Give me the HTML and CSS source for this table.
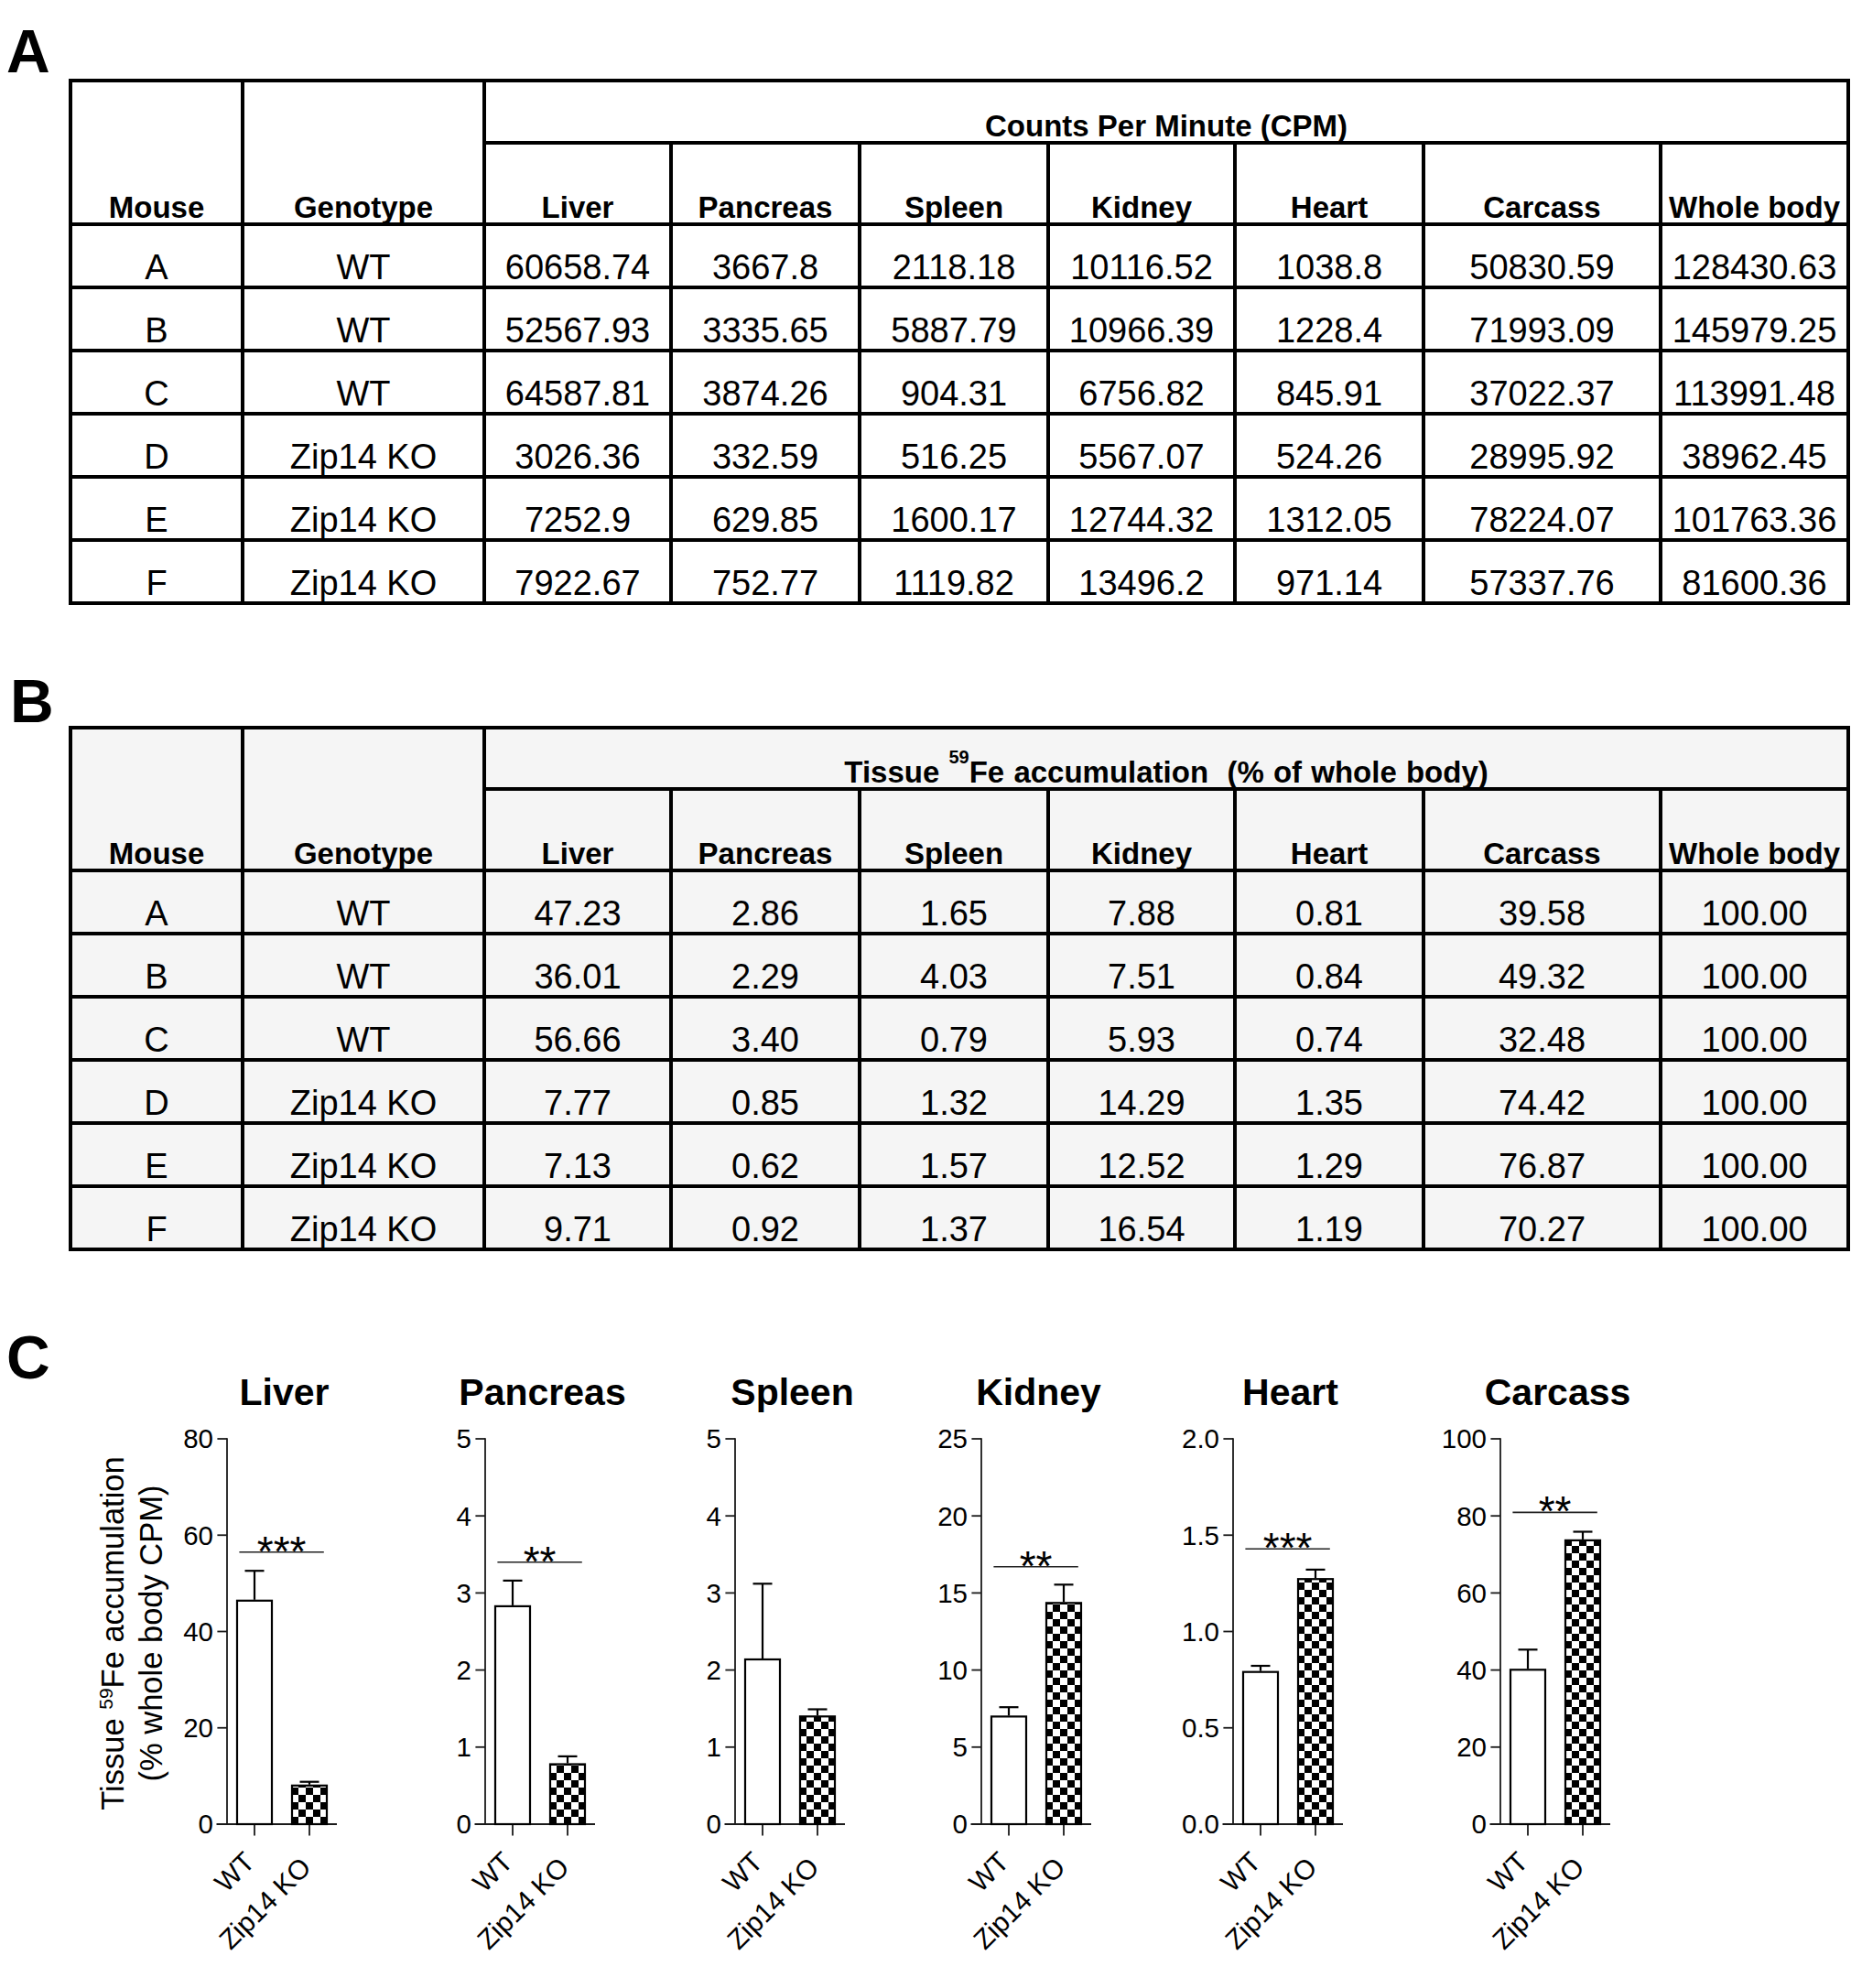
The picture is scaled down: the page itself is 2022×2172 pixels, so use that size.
FILE: index.html
```html
<!DOCTYPE html>
<html lang="en">
<head>
<meta charset="utf-8">
<title>Tissue 59Fe accumulation</title>
<link rel="stylesheet" href="styles.css">
</head>
<body>
<section class="panel panel-a">
  <div class="panel-label">A</div>
  <table class="data-table">
    <colgroup>
      <col class="col-mouse"><col class="col-geno"><col class="col-a"><col class="col-b"><col class="col-c"><col class="col-d"><col class="col-e"><col class="col-f"><col class="col-g">
    </colgroup>
    <tr class="row-top"><th rowspan="2">Mouse</th><th rowspan="2">Genotype</th><th colspan="7">Counts Per Minute (CPM)</th></tr>
    <tr class="row-sub"><th>Liver</th><th>Pancreas</th><th>Spleen</th><th>Kidney</th><th>Heart</th><th>Carcass</th><th>Whole body</th></tr>
    <tr class="row-data"><td>A</td><td>WT</td><td>60658.74</td><td>3667.8</td><td>2118.18</td><td>10116.52</td><td>1038.8</td><td>50830.59</td><td>128430.63</td></tr>
    <tr class="row-data"><td>B</td><td>WT</td><td>52567.93</td><td>3335.65</td><td>5887.79</td><td>10966.39</td><td>1228.4</td><td>71993.09</td><td>145979.25</td></tr>
    <tr class="row-data"><td>C</td><td>WT</td><td>64587.81</td><td>3874.26</td><td>904.31</td><td>6756.82</td><td>845.91</td><td>37022.37</td><td>113991.48</td></tr>
    <tr class="row-data"><td>D</td><td>Zip14 KO</td><td>3026.36</td><td>332.59</td><td>516.25</td><td>5567.07</td><td>524.26</td><td>28995.92</td><td>38962.45</td></tr>
    <tr class="row-data"><td>E</td><td>Zip14 KO</td><td>7252.9</td><td>629.85</td><td>1600.17</td><td>12744.32</td><td>1312.05</td><td>78224.07</td><td>101763.36</td></tr>
    <tr class="row-data"><td>F</td><td>Zip14 KO</td><td>7922.67</td><td>752.77</td><td>1119.82</td><td>13496.2</td><td>971.14</td><td>57337.76</td><td>81600.36</td></tr>
  </table>
</section>

<section class="panel panel-b">
  <div class="panel-label">B</div>
  <table class="data-table shaded">
    <colgroup>
      <col class="col-mouse"><col class="col-geno"><col class="col-a"><col class="col-b"><col class="col-c"><col class="col-d"><col class="col-e"><col class="col-f"><col class="col-g">
    </colgroup>
    <tr class="row-top"><th rowspan="2">Mouse</th><th rowspan="2">Genotype</th><th colspan="7" class="wide-head">Tissue <sup class="iso">59</sup>Fe accumulation&nbsp; (% of whole body)</th></tr>
    <tr class="row-sub"><th>Liver</th><th>Pancreas</th><th>Spleen</th><th>Kidney</th><th>Heart</th><th>Carcass</th><th>Whole body</th></tr>
    <tr class="row-data"><td>A</td><td>WT</td><td>47.23</td><td>2.86</td><td>1.65</td><td>7.88</td><td>0.81</td><td>39.58</td><td>100.00</td></tr>
    <tr class="row-data"><td>B</td><td>WT</td><td>36.01</td><td>2.29</td><td>4.03</td><td>7.51</td><td>0.84</td><td>49.32</td><td>100.00</td></tr>
    <tr class="row-data"><td>C</td><td>WT</td><td>56.66</td><td>3.40</td><td>0.79</td><td>5.93</td><td>0.74</td><td>32.48</td><td>100.00</td></tr>
    <tr class="row-data"><td>D</td><td>Zip14 KO</td><td>7.77</td><td>0.85</td><td>1.32</td><td>14.29</td><td>1.35</td><td>74.42</td><td>100.00</td></tr>
    <tr class="row-data"><td>E</td><td>Zip14 KO</td><td>7.13</td><td>0.62</td><td>1.57</td><td>12.52</td><td>1.29</td><td>76.87</td><td>100.00</td></tr>
    <tr class="row-data"><td>F</td><td>Zip14 KO</td><td>9.71</td><td>0.92</td><td>1.37</td><td>16.54</td><td>1.19</td><td>70.27</td><td>100.00</td></tr>
  </table>
</section>

<section class="panel panel-c">
  <div class="panel-label c-label">C</div>

  <!-- Liver -->
  <svg class="chart chart-liver" viewBox="0 0 340 690">
    <defs>
      <pattern id="checker" x="70" y="2" width="16" height="16" patternUnits="userSpaceOnUse">
        <rect width="16" height="16" fill="#fff"/>
        <rect x="8" y="0" width="8" height="8" fill="#000"/>
        <rect x="0" y="8" width="8" height="8" fill="#000"/>
      </pattern>
    </defs>
    <text class="ytitle" transform="translate(35 321.5) rotate(-90)">Tissue <tspan class="ysup" dy="-12">59</tspan><tspan dy="12">Fe accumulation</tspan></text>
    <text class="ytitle" transform="translate(76.5 321.5) rotate(-90)">(% whole body CPM)</text>
    <g transform="translate(148 0)">
      <text class="title" x="62.5" y="72">Liver</text>
      <line class="axis" x1="0" y1="108.3" x2="0" y2="530.7"/>
      <line class="axis" x1="-11.5" y1="530" x2="120" y2="530"/>
      <line class="axis" x1="-10.6" y1="530" x2="0" y2="530"/>
      <line class="axis" x1="-10.6" y1="424.75" x2="0" y2="424.75"/>
      <line class="axis" x1="-10.6" y1="319.5" x2="0" y2="319.5"/>
      <line class="axis" x1="-10.6" y1="214.25" x2="0" y2="214.25"/>
      <line class="axis" x1="-10.6" y1="109" x2="0" y2="109"/>
      <text class="tick" x="-15" y="540.4">0</text>
      <text class="tick" x="-15" y="435.15">20</text>
      <text class="tick" x="-15" y="329.9">40</text>
      <text class="tick" x="-15" y="224.65">60</text>
      <text class="tick" x="-15" y="119.4">80</text>
      <line class="axis" x1="30" y1="530" x2="30" y2="542.5"/>
      <line class="axis" x1="90" y1="530" x2="90" y2="542.5"/>
      <line class="err" x1="30" y1="284.8" x2="30" y2="253.2"/>
      <line class="err" x1="19.5" y1="253.2" x2="40.5" y2="253.2"/>
      <rect class="bar" x="11" y="285.8" width="38" height="244.2"/>
      <line class="err" x1="90" y1="486.8" x2="90" y2="483.7"/>
      <line class="err" x1="79.5" y1="483.7" x2="100.5" y2="483.7"/>
      <rect class="bar bar-ko" x="71" y="487.8" width="38" height="42.2"/>
      <line class="sig" x1="13.4" y1="232.7" x2="105.8" y2="232.7"/>
      <text class="stars" x="59.6" y="247.7">***</text>
      <text class="xlabel" transform="translate(32 573) rotate(-45)">WT</text>
      <text class="xlabel" transform="translate(93.5 579) rotate(-45)">Zip14 KO</text>
    </g>
  </svg>

  <!-- Pancreas -->
  <svg class="chart chart-pancreas" viewBox="0 0 273 690">
    <g transform="translate(90 0)">
      <text class="title" x="62.5" y="72">Pancreas</text>
      <line class="axis" x1="0" y1="108.3" x2="0" y2="530.7"/>
      <line class="axis" x1="-11.5" y1="530" x2="120" y2="530"/>
      <line class="axis" x1="-10.6" y1="530" x2="0" y2="530"/>
      <line class="axis" x1="-10.6" y1="445.8" x2="0" y2="445.8"/>
      <line class="axis" x1="-10.6" y1="361.6" x2="0" y2="361.6"/>
      <line class="axis" x1="-10.6" y1="277.4" x2="0" y2="277.4"/>
      <line class="axis" x1="-10.6" y1="193.2" x2="0" y2="193.2"/>
      <line class="axis" x1="-10.6" y1="109" x2="0" y2="109"/>
      <text class="tick" x="-15" y="540.4">0</text>
      <text class="tick" x="-15" y="456.2">1</text>
      <text class="tick" x="-15" y="372">2</text>
      <text class="tick" x="-15" y="287.8">3</text>
      <text class="tick" x="-15" y="203.6">4</text>
      <text class="tick" x="-15" y="119.4">5</text>
      <line class="axis" x1="30" y1="530" x2="30" y2="542.5"/>
      <line class="axis" x1="90" y1="530" x2="90" y2="542.5"/>
      <line class="err" x1="30" y1="290.9" x2="30" y2="263.9"/>
      <line class="err" x1="19.5" y1="263.9" x2="40.5" y2="263.9"/>
      <rect class="bar" x="11" y="291.9" width="38" height="238.1"/>
      <line class="err" x1="90" y1="463.5" x2="90" y2="455.9"/>
      <line class="err" x1="79.5" y1="455.9" x2="100.5" y2="455.9"/>
      <rect class="bar bar-ko" x="71" y="464.5" width="38" height="65.5"/>
      <line class="sig" x1="13.4" y1="243.7" x2="105.8" y2="243.7"/>
      <text class="stars" x="59.6" y="258.7">**</text>
      <text class="xlabel" transform="translate(32 573) rotate(-45)">WT</text>
      <text class="xlabel" transform="translate(93.5 579) rotate(-45)">Zip14 KO</text>
    </g>
  </svg>

  <!-- Spleen -->
  <svg class="chart chart-spleen" viewBox="0 0 269 690">
    <g transform="translate(90 0)">
      <text class="title" x="62.5" y="72">Spleen</text>
      <line class="axis" x1="0" y1="108.3" x2="0" y2="530.7"/>
      <line class="axis" x1="-11.5" y1="530" x2="120" y2="530"/>
      <line class="axis" x1="-10.6" y1="530" x2="0" y2="530"/>
      <line class="axis" x1="-10.6" y1="445.8" x2="0" y2="445.8"/>
      <line class="axis" x1="-10.6" y1="361.6" x2="0" y2="361.6"/>
      <line class="axis" x1="-10.6" y1="277.4" x2="0" y2="277.4"/>
      <line class="axis" x1="-10.6" y1="193.2" x2="0" y2="193.2"/>
      <line class="axis" x1="-10.6" y1="109" x2="0" y2="109"/>
      <text class="tick" x="-15" y="540.4">0</text>
      <text class="tick" x="-15" y="456.2">1</text>
      <text class="tick" x="-15" y="372">2</text>
      <text class="tick" x="-15" y="287.8">3</text>
      <text class="tick" x="-15" y="203.6">4</text>
      <text class="tick" x="-15" y="119.4">5</text>
      <line class="axis" x1="30" y1="530" x2="30" y2="542.5"/>
      <line class="axis" x1="90" y1="530" x2="90" y2="542.5"/>
      <line class="err" x1="30" y1="349" x2="30" y2="267.3"/>
      <line class="err" x1="19.5" y1="267.3" x2="40.5" y2="267.3"/>
      <rect class="bar" x="11" y="350" width="38" height="180"/>
      <line class="err" x1="90" y1="411.3" x2="90" y2="404.5"/>
      <line class="err" x1="79.5" y1="404.5" x2="100.5" y2="404.5"/>
      <rect class="bar bar-ko" x="71" y="412.3" width="38" height="117.7"/>
      <text class="xlabel" transform="translate(32 573) rotate(-45)">WT</text>
      <text class="xlabel" transform="translate(93.5 579) rotate(-45)">Zip14 KO</text>
    </g>
  </svg>

  <!-- Kidney -->
  <svg class="chart chart-kidney" viewBox="0 0 275 690">
    <g transform="translate(90 0)">
      <text class="title" x="62.5" y="72">Kidney</text>
      <line class="axis" x1="0" y1="108.3" x2="0" y2="530.7"/>
      <line class="axis" x1="-11.5" y1="530" x2="120" y2="530"/>
      <line class="axis" x1="-10.6" y1="530" x2="0" y2="530"/>
      <line class="axis" x1="-10.6" y1="445.8" x2="0" y2="445.8"/>
      <line class="axis" x1="-10.6" y1="361.6" x2="0" y2="361.6"/>
      <line class="axis" x1="-10.6" y1="277.4" x2="0" y2="277.4"/>
      <line class="axis" x1="-10.6" y1="193.2" x2="0" y2="193.2"/>
      <line class="axis" x1="-10.6" y1="109" x2="0" y2="109"/>
      <text class="tick" x="-15" y="540.4">0</text>
      <text class="tick" x="-15" y="456.2">5</text>
      <text class="tick" x="-15" y="372">10</text>
      <text class="tick" x="-15" y="287.8">15</text>
      <text class="tick" x="-15" y="203.6">20</text>
      <text class="tick" x="-15" y="119.4">25</text>
      <line class="axis" x1="30" y1="530" x2="30" y2="542.5"/>
      <line class="axis" x1="90" y1="530" x2="90" y2="542.5"/>
      <line class="err" x1="30" y1="411.4" x2="30" y2="402.2"/>
      <line class="err" x1="19.5" y1="402.2" x2="40.5" y2="402.2"/>
      <rect class="bar" x="11" y="412.4" width="38" height="117.6"/>
      <line class="err" x1="90" y1="287.3" x2="90" y2="268.3"/>
      <line class="err" x1="79.5" y1="268.3" x2="100.5" y2="268.3"/>
      <rect class="bar bar-ko" x="71" y="288.3" width="38" height="241.7"/>
      <line class="sig" x1="13.4" y1="248.8" x2="105.8" y2="248.8"/>
      <text class="stars" x="59.6" y="263.8">**</text>
      <text class="xlabel" transform="translate(32 573) rotate(-45)">WT</text>
      <text class="xlabel" transform="translate(93.5 579) rotate(-45)">Zip14 KO</text>
    </g>
  </svg>

  <!-- Heart -->
  <svg class="chart chart-heart" viewBox="0 0 292 690">
    <g transform="translate(90 0)">
      <text class="title" x="62.5" y="72">Heart</text>
      <line class="axis" x1="0" y1="108.3" x2="0" y2="530.7"/>
      <line class="axis" x1="-11.5" y1="530" x2="120" y2="530"/>
      <line class="axis" x1="-10.6" y1="530" x2="0" y2="530"/>
      <line class="axis" x1="-10.6" y1="424.75" x2="0" y2="424.75"/>
      <line class="axis" x1="-10.6" y1="319.5" x2="0" y2="319.5"/>
      <line class="axis" x1="-10.6" y1="214.25" x2="0" y2="214.25"/>
      <line class="axis" x1="-10.6" y1="109" x2="0" y2="109"/>
      <text class="tick" x="-15" y="540.4">0.0</text>
      <text class="tick" x="-15" y="435.15">0.5</text>
      <text class="tick" x="-15" y="329.9">1.0</text>
      <text class="tick" x="-15" y="224.65">1.5</text>
      <text class="tick" x="-15" y="119.4">2.0</text>
      <line class="axis" x1="30" y1="530" x2="30" y2="542.5"/>
      <line class="axis" x1="90" y1="530" x2="90" y2="542.5"/>
      <line class="err" x1="30" y1="362.7" x2="30" y2="357"/>
      <line class="err" x1="19.5" y1="357" x2="40.5" y2="357"/>
      <rect class="bar" x="11" y="363.7" width="38" height="166.3"/>
      <line class="err" x1="90" y1="261.2" x2="90" y2="251.9"/>
      <line class="err" x1="79.5" y1="251.9" x2="100.5" y2="251.9"/>
      <rect class="bar bar-ko" x="71" y="262.2" width="38" height="267.8"/>
      <line class="sig" x1="13.4" y1="229.2" x2="105.8" y2="229.2"/>
      <text class="stars" x="59.6" y="244.2">***</text>
      <text class="xlabel" transform="translate(32 573) rotate(-45)">WT</text>
      <text class="xlabel" transform="translate(93.5 579) rotate(-45)">Zip14 KO</text>
    </g>
  </svg>

  <!-- Carcass -->
  <svg class="chart chart-carcass" viewBox="0 0 320 690">
    <g transform="translate(90 0)">
      <text class="title" x="62.5" y="72">Carcass</text>
      <line class="axis" x1="0" y1="108.3" x2="0" y2="530.7"/>
      <line class="axis" x1="-11.5" y1="530" x2="120" y2="530"/>
      <line class="axis" x1="-10.6" y1="530" x2="0" y2="530"/>
      <line class="axis" x1="-10.6" y1="445.8" x2="0" y2="445.8"/>
      <line class="axis" x1="-10.6" y1="361.6" x2="0" y2="361.6"/>
      <line class="axis" x1="-10.6" y1="277.4" x2="0" y2="277.4"/>
      <line class="axis" x1="-10.6" y1="193.2" x2="0" y2="193.2"/>
      <line class="axis" x1="-10.6" y1="109" x2="0" y2="109"/>
      <text class="tick" x="-15" y="540.4">0</text>
      <text class="tick" x="-15" y="456.2">20</text>
      <text class="tick" x="-15" y="372">40</text>
      <text class="tick" x="-15" y="287.8">60</text>
      <text class="tick" x="-15" y="203.6">80</text>
      <text class="tick" x="-15" y="119.4">100</text>
      <line class="axis" x1="30" y1="530" x2="30" y2="542.5"/>
      <line class="axis" x1="90" y1="530" x2="90" y2="542.5"/>
      <line class="err" x1="30" y1="360.3" x2="30" y2="339.3"/>
      <line class="err" x1="19.5" y1="339.3" x2="40.5" y2="339.3"/>
      <rect class="bar" x="11" y="361.3" width="38" height="168.7"/>
      <line class="err" x1="90" y1="218.9" x2="90" y2="210.5"/>
      <line class="err" x1="79.5" y1="210.5" x2="100.5" y2="210.5"/>
      <rect class="bar bar-ko" x="71" y="219.9" width="38" height="310.1"/>
      <line class="sig" x1="13.4" y1="189.4" x2="105.8" y2="189.4"/>
      <text class="stars" x="59.6" y="204.4">**</text>
      <text class="xlabel" transform="translate(32 573) rotate(-45)">WT</text>
      <text class="xlabel" transform="translate(93.5 579) rotate(-45)">Zip14 KO</text>
    </g>
  </svg>
</section>
</body>
</html>
```

FILE: styles.css
```css
html, body {
  margin: 0;
  padding: 0;
  background: #fff;
  color: #000;
  font-family: "Liberation Sans", Arial, sans-serif;
}

.panel-label {
  font-family: "Liberation Sans", Arial, sans-serif;
  font-weight: bold;
  font-size: 66px;
  line-height: 50px;
  height: 50px;
  padding-left: 7px;
}

.panel-a {
  padding-top: 31px;
}

.panel-a .data-table {
  margin-top: 5px;
}

.panel-b {
  margin-top: 80px;
}

.panel-b .panel-label {
  padding-left: 11px;
}

.panel-b .data-table {
  margin-top: 2px;
}

/* ---------- tables ---------- */
.data-table {
  border-collapse: collapse;
  table-layout: fixed;
  width: 1946px;
  margin-left: 75px;
  background: #fff;
}

.data-table.shaded {
  background: #f5f5f5;
}

.col-mouse { width: 188px; }
.col-geno { width: 264px; }
.col-a { width: 204px; }
.col-b { width: 206px; }
.col-c { width: 206px; }
.col-d { width: 204px; }
.col-e { width: 206px; }
.col-f { width: 259px; }
.col-g { width: 205px; }

.data-table th,
.data-table td {
  border: 4px solid #000;
  padding: 0;
  text-align: center;
  vertical-align: bottom;
  white-space: nowrap;
}

.data-table th {
  font-weight: bold;
  font-size: 33px;
  line-height: 32px;
}

.data-table td {
  font-weight: normal;
  font-size: 38px;
  line-height: 40px;
}

.data-table .wide-head {
  word-spacing: 1px;
}

.row-top { height: 67.5px; }
.row-sub { height: 89px; }
.row-data { height: 69px; }

.iso {
  font-size: 20px;
  line-height: 20px;
  vertical-align: 21px;
  word-spacing: 0;
}

/* ---------- panel C charts ---------- */
.panel-c {
  display: flex;
  align-items: flex-start;
  margin-top: 96px;
}

.c-label {
  width: 100px;
  flex: none;
  box-sizing: border-box;
  margin-top: -5px;
}

.chart {
  display: block;
  flex: none;
  height: 690px;
  overflow: visible;
}

.chart-liver { width: 340px; }
.chart-pancreas { width: 273px; }
.chart-spleen { width: 269px; }
.chart-kidney { width: 275px; }
.chart-heart { width: 292px; }
.chart-carcass { width: 320px; }

.chart text {
  font-family: "Liberation Sans", Arial, sans-serif;
  fill: #000;
}

.chart .title {
  font-size: 41px;
  font-weight: bold;
  text-anchor: middle;
}

.chart .tick {
  font-size: 29.5px;
  text-anchor: end;
}

.chart .xlabel {
  font-size: 30px;
  text-anchor: end;
}

.chart .stars {
  font-size: 46px;
  text-anchor: middle;
}

.chart .ytitle {
  font-size: 34.5px;
  text-anchor: middle;
}

.chart .ysup {
  font-size: 21px;
}

.axis {
  stroke: #1a1a1a;
  stroke-width: 1.8;
}

.err {
  stroke: #000;
  stroke-width: 2.2;
}

.bar {
  fill: #fff;
  stroke: #000;
  stroke-width: 2.2;
}

.bar-ko {
  fill: url(#checker);
}

.sig {
  stroke: #222;
  stroke-width: 1.6;
}
```
